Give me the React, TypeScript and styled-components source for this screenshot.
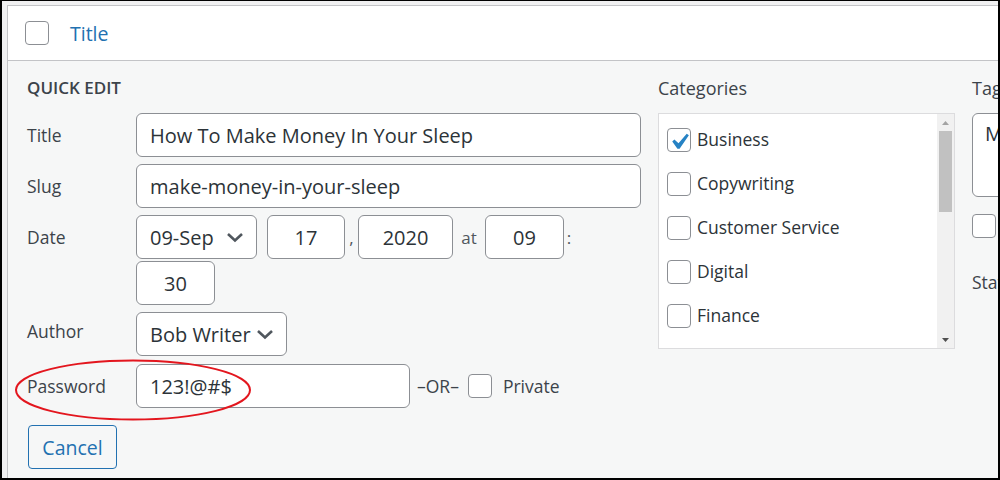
import styled, { createGlobalStyle } from "styled-components"

const Global = createGlobalStyle`
  body {
    margin: 0;
    font-family: "Open Sans", "Noto Sans", sans-serif;
  }
`;

const Frame = styled.div`
  position: relative;
  width: 1000px;
  height: 480px;
  box-sizing: border-box;
  border: 2px solid #000;
  border-top-width: 1px;
  background: #f0f0f1;
  padding: 4px 0 0 5px;
  overflow: hidden;
  display: flex;
`;

const Table = styled.div`
  flex: 1;
  display: flex;
  flex-direction: column;
  border-left: 1px solid #c3c4c7;
  border-top: 1px solid #c3c4c7;
`;

const HeadRow = styled.div`
  height: 54px;
  background: #fff;
  border-bottom: 1px solid #c3c4c7;
  display: flex;
  align-items: center;
  padding-left: 17px;
  gap: 21px;
`;

const HeadTitle = styled.span`
  color: #2271b1;
  font-size: 19.5px;
`;

const Box = styled.span`
  width: 24px;
  height: 24px;
  box-sizing: border-box;
  flex: none;
  border: 1px solid #8c8f94;
  border-radius: 4px;
  background: #fff;
  display: flex;
  align-items: center;
  justify-content: center;
  overflow: visible;
`;

const Edit = styled.div`
  flex: 1;
  background: #f6f7f7;
  padding: 14px 0 0 19px;
  display: grid;
  grid-template-columns: 614px 297px 200px;
  column-gap: 17px;
  color: #3c434a;
`;

const Column = styled.div`
  display: flex;
  flex-direction: column;
`;

const Legend = styled.div<{ $bold?: boolean }>`
  height: 26px;
  line-height: 26px;
  margin-bottom: 12px;
  font-size: ${p => (p.$bold ? "17px" : "18px")};
  font-weight: ${p => (p.$bold ? 600 : 400)};
  color: #3c434a;
  white-space: nowrap;
`;

const Row = styled.div<{ $gap?: number }>`
  display: flex;
  align-items: flex-start;
  margin-bottom: ${p => p.$gap ?? 7}px;
`;

const Label = styled.span`
  width: 109px;
  flex: none;
  line-height: 44px;
  font-size: 17.5px;
  color: #3c434a;
`;

const Field = styled.div<{ $w?: number; $center?: boolean }>`
  width: ${p => (p.$w ? `${p.$w}px` : "auto")};
  flex: ${p => (p.$w ? "none" : "1")};
  height: 44px;
  box-sizing: border-box;
  border: 1px solid #8c8f94;
  border-radius: 6px;
  background: #fff;
  display: flex;
  align-items: center;
  justify-content: ${p => (p.$center ? "center" : "space-between")};
  padding: ${p => (p.$center ? "0" : "0 12px 0 13px")};
  font-size: 20px;
  color: #2c3338;
  white-space: nowrap;
`;

const DateWrap = styled.div`
  flex: 1;
  display: flex;
  flex-wrap: wrap;
  align-items: center;
  row-gap: 2px;
`;

const Sep = styled.span<{ $w: number }>`
  width: ${p => p.$w}px;
  text-align: center;
  font-size: 17px;
  color: #50575e;
`;

const Inline = styled.div`
  display: flex;
  align-items: center;
  height: 44px;
  gap: 9px;
  margin-left: 7px;
  font-size: 17.5px;
  color: #3c434a;
`;

const Cancel = styled.button`
  margin-top: 17px;
  margin-left: 1px;
  width: 89px;
  height: 44px;
  border: 1px solid #2271b1;
  border-radius: 4px;
  background: #f6f7f7;
  color: #2271b1;
  font-family: inherit;
  font-size: 19.5px;
  padding: 0;
`;

const CatBox = styled.div`
  height: 236px;
  box-sizing: border-box;
  border: 1px solid #dcdcde;
  background: #fff;
  display: flex;
`;

const CatList = styled.div`
  flex: 1;
  padding: 4px 8px;
`;

const CatItem = styled.div`
  height: 44px;
  display: flex;
  align-items: center;
  gap: 6px;
  font-size: 17.5px;
  color: #2c3338;

  span + span {
    margin-top: -3px;
  }
`;

const Scroll = styled.div`
  width: 17px;
  background: #f1f1f1;
  display: flex;
  flex-direction: column;
  align-items: center;
`;

const Arrow = styled.div`
  height: 17px;
  display: flex;
  align-items: center;
`;

const Thumb = styled.div`
  width: 13px;
  height: 81px;
  background: #c1c1c1;
`;

const TagArea = styled.div`
  height: 84px;
  box-sizing: border-box;
  border: 1px solid #8c8f94;
  border-radius: 6px;
  background: #fff;
  padding: 6px 12px;
  font-size: 20px;
  color: #2c3338;
`;

const TagCheck = styled.div`
  margin-top: 17px;
`;

const Status = styled.div`
  margin-top: 32px;
  font-size: 17.5px;
  color: #3c434a;
`;

const Mark = styled.svg`
  position: absolute;
  left: 12px;
  top: 357px;
  pointer-events: none;
`;

function Chevron() {
  return (
    <svg width="18" height="12" viewBox="0 0 18 12">
      <polyline points="2,3 9,9.5 16,3" fill="none" stroke="#50575e" strokeWidth="2.6" />
    </svg>
  )
}

function Check() {
  return (
    <svg width="32" height="32" viewBox="0 0 20 20" style={{ marginTop: 3, flex: "none" }}>
      <path d="M14.83 4.89l1.34.94-5.81 8.38H9.02L5.78 9.67l1.34-1.25 2.57 2.4z" fill="#2682c4" />
    </svg>
  )
}

const cats = ["Business", "Copywriting", "Customer Service", "Digital", "Finance"]

function App() {
  return (
    <>
      <Global />
      <Frame>
        <Table>
          <HeadRow>
            <Box />
            <HeadTitle>Title</HeadTitle>
          </HeadRow>
          <Edit>
            <Column>
              <Legend $bold>QUICK EDIT</Legend>
              <Row>
                <Label>Title</Label>
                <Field>How To Make Money In Your Sleep</Field>
              </Row>
              <Row>
                <Label>Slug</Label>
                <Field>make-money-in-your-sleep</Field>
              </Row>
              <Row>
                <Label>Date</Label>
                <DateWrap>
                  <Field $w={121} style={{ marginRight: 10 }}>09-Sep <Chevron /></Field>
                  <Field $w={78} $center>17</Field>
                  <Sep $w={13}>,</Sep>
                  <Field $w={95} $center>2020</Field>
                  <Sep $w={32}>at</Sep>
                  <Field $w={79} $center>09</Field>
                  <Sep $w={10}>:</Sep>
                  <Field $w={79} $center>30</Field>
                </DateWrap>
              </Row>
              <Row $gap={8}>
                <Label style={{ marginTop: -3 }}>Author</Label>
                <Field $w={151}>Bob Writer <Chevron /></Field>
              </Row>
              <Row $gap={0}>
                <Label>Password</Label>
                <Field $w={274}>123!@#$</Field>
                <Inline>
                  <span>–OR–</span>
                  <Box />
                  <span style={{ marginLeft: 2 }}>Private</span>
                </Inline>
              </Row>
              <div>
                <Cancel>Cancel</Cancel>
              </div>
            </Column>
            <Column>
              <Legend>Categories</Legend>
              <CatBox>
                <CatList>
                  {cats.map((c, i) => (
                    <CatItem key={c}>
                      <Box>{i === 0 && <Check />}</Box>
                      <span>{c}</span>
                    </CatItem>
                  ))}
                </CatList>
                <Scroll>
                  <Arrow>
                    <svg width="9" height="6" viewBox="0 0 9 6"><polygon points="4.5,1 8,5 1,5" fill="#a3a3a3" /></svg>
                  </Arrow>
                  <Thumb />
                  <div style={{ flex: 1 }} />
                  <Arrow>
                    <svg width="9" height="6" viewBox="0 0 9 6"><polygon points="1,1 8,1 4.5,5" fill="#505050" /></svg>
                  </Arrow>
                </Scroll>
              </CatBox>
            </Column>
            <Column>
              <Legend>Tags</Legend>
              <TagArea>Money</TagArea>
              <TagCheck><Box /></TagCheck>
              <Status>Status</Status>
            </Column>
          </Edit>
        </Table>
        <Mark width="240" height="66" viewBox="0 0 240 66">
          <ellipse cx="119" cy="32" rx="117" ry="29.5" fill="none" stroke="#e3161e" strokeWidth="2" />
        </Mark>
      </Frame>
    </>
  )
}

export default App
